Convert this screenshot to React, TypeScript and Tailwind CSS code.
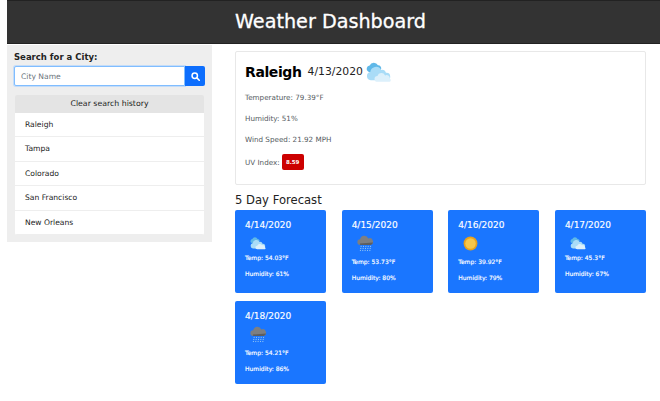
const cities = ["Raleigh", "Tampa", "Colorado", "San Francisco", "New Orleans"];

type IconKind = "cloud" | "rain" | "sun";

const forecast: { date: string; icon: IconKind; temp: string; humidity: string }[] = [
  { date: "4/14/2020", icon: "cloud", temp: "54.03", humidity: "61" },
  { date: "4/15/2020", icon: "rain", temp: "53.73", humidity: "80" },
  { date: "4/16/2020", icon: "sun", temp: "39.92", humidity: "79" },
  { date: "4/17/2020", icon: "cloud", temp: "45.3", humidity: "67" },
  { date: "4/18/2020", icon: "rain", temp: "54.21", humidity: "86" },
];

function BrokenClouds({ className }: { className: string }) {
  return (
    <svg viewBox="0 0 26 20" className={className}>
      <path d="M2 9a3.2 3.2 0 0 1 1.5-5.8A4.4 4.4 0 0 1 11.5 3a3 3 0 0 1 3 4L6 11z" fill="#5fb8e8" />
      <path d="M4.5 17.5a4 4 0 0 1-.4-7.9A5.6 5.6 0 0 1 14.6 7.5a4 4 0 0 1 4.6 2.8 3.6 3.6 0 0 1 1 7.2z" fill="#a9dcf7" />
      <path d="M11 19a2.8 2.8 0 0 1 0-5.6 4 4 0 0 1 7.4-.6 3.2 3.2 0 0 1 4.6 3 2 2 0 0 1 0 3.2z" fill="#dcf0fb" />
    </svg>
  );
}

function RainCloud() {
  return (
    <svg viewBox="0 0 18 18" className="w-[17px] h-[17px]">
      <path d="M3.5 10.5a3 3 0 0 1-.2-6A4.6 4.6 0 0 1 12 3.6a3.5 3.5 0 0 1 2.6 6.9z" fill="#7d7f82" />
      <path d="M3 9a3 3 0 0 0 .5 1.5h11A3.4 3.4 0 0 0 17 8z" fill="#5c5e61" />
      <g stroke="#a6d3f2" strokeWidth="0.9" strokeDasharray="1.2 1">
        <path d="M4.5 11.5l-1 5.5" />
        <path d="M7 11.5l-1 5.5" />
        <path d="M9.5 11.5l-1 5.5" />
        <path d="M12 11.5l-1 5.5" />
        <path d="M14.5 11.5l-1 5.5" />
      </g>
    </svg>
  );
}

function Sun() {
  return (
    <svg viewBox="0 0 16 16" className="w-[15px] h-[15px]">
      <circle cx="8" cy="8" r="7.4" fill="#e8a11c" />
      <circle cx="8" cy="8" r="5.6" fill="#f7c64a" />
    </svg>
  );
}

function ForecastIcon({ kind }: { kind: IconKind }) {
  if (kind === "sun") return <Sun />;
  if (kind === "rain") return <RainCloud />;
  return <BrokenClouds className="w-[17px] h-[13px]" />;
}

export default function App() {
  return (
    <div
      className="w-[660px] h-[401px] bg-white overflow-hidden pl-[7px]"
      style={{ fontFamily: '"DejaVu Sans", sans-serif' }}
    >
      <header className="h-[44px] bg-[#333333] border-y border-[#222] flex items-center pl-[228px] text-white text-[19.2px] leading-none [-webkit-text-stroke:0.3px_white]">
        Weather Dashboard
      </header>

      <div className="flex items-start">
        <aside className="w-[205px] h-[197px] mt-[1px] bg-[#eeeeee] px-[7px] pt-[5px]">
          <label className="block text-[8.5px] leading-[14px] font-bold text-[#222]">Search for a City:</label>
          <div className="flex mt-[2px] h-[20px]">
            <input
              placeholder="City Name"
              readOnly
              className="w-[171px] h-full bg-white border border-[#80bdff] shadow-[0_0_0_1px_#c4dcf8] rounded-l-[2px] px-[6px] text-[7.6px] outline-none placeholder:text-[#6c757d]"
            />
            <button className="w-[20px] h-full bg-[#0d6efd] rounded-r-[2px] flex items-center justify-center">
              <svg viewBox="0 0 12 12" className="w-[9px] h-[9px]" fill="none" stroke="white" strokeWidth="2">
                <circle cx="5" cy="5" r="3.6" />
                <path d="M7.8 7.8L11 11" strokeLinecap="round" />
              </svg>
            </button>
          </div>
          <div className="mt-[9px] ml-[1px] w-[189px] rounded-[2px] overflow-hidden">
            <div className="h-[18px] bg-[#e4e4e4] flex items-center justify-center text-[7.8px] text-[#222]">
              Clear search history
            </div>
            <ul>
              {cities.map((city) => (
                <li
                  key={city}
                  className="h-[24.4px] bg-white border-b border-[#eeeeee] flex items-center pl-[10px] text-[7.6px] text-[#222]"
                >
                  {city}
                </li>
              ))}
            </ul>
          </div>
        </aside>

        <main className="w-[411px] ml-[23px] mt-[7px]">
          <section className="h-[134px] border border-[#e8e8e8] rounded-[2px] pl-[9px] pt-[8px]">
            <div className="flex items-center h-[24px]">
              <h1 className="text-[14px] tracking-[-0.4px] font-bold text-black">Raleigh</h1>
              <span className="ml-[6px] text-[10.8px] text-[#222]">4/13/2020</span>
              <BrokenClouds className="ml-[3px] w-[27px] h-[21px]" />
            </div>
            <div className="mt-[8px] text-[7.2px] text-[#555b61] leading-[11px]">
              <p>Temperature: 79.39°F</p>
              <p className="mt-[10px]">Humidity: 51%</p>
              <p className="mt-[10px]">Wind Speed: 21.92 MPH</p>
              <p className="mt-[9px] flex items-center">
                UV Index:
                <span className="ml-[2px] w-[22px] h-[16px] rounded-[2px] bg-[#cc0000] text-white text-[5.5px] font-bold flex items-center justify-center">
                  8.59
                </span>
              </p>
            </div>
          </section>

          <h2 className="mt-[6px] text-[11.6px] leading-[19px] text-[#222]">5 Day Forecast</h2>

          <div className="grid grid-cols-4 gap-x-[15.5px] gap-y-[8px]">
            {forecast.map((day) => (
              <div key={day.date} className="h-[83px] bg-[#1a76ff] rounded-[2px] text-white pl-[10px] pt-[9px] [-webkit-text-stroke:0.15px_white]">
                <div className="text-[9px] leading-[12px]">{day.date}</div>
                <div className="h-[18px] mt-[3px] ml-[5px] flex items-center">
                  <ForecastIcon kind={day.icon} />
                </div>
                <div className={`text-[6px] leading-[9px] ${day.icon === "cloud" ? "mt-[1px]" : "mt-[5px]"}`}>
                  Temp: {day.temp}°F
                </div>
                <div className="mt-[7px] text-[6px] leading-[9px]">Humidity: {day.humidity}%</div>
              </div>
            ))}
          </div>
        </main>
      </div>
    </div>
  );
}
